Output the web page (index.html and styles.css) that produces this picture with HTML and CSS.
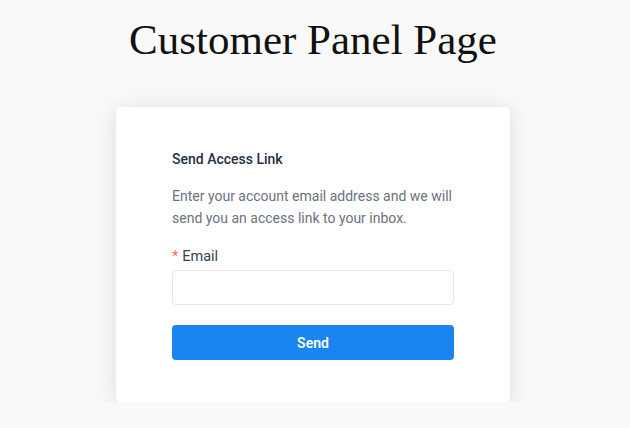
FILE: index.html
```html
<!DOCTYPE html>
<html>
<head>
<meta charset="utf-8">
<link rel="stylesheet" href="styles.css">
</head>
<body>
<main class="page">
  <h1 class="title">Customer Panel Page</h1>
  <section class="card">
    <h2 class="card-title">Send Access Link</h2>
    <p class="card-text">Enter your account email address and we will send you an access link to your inbox.</p>
    <form class="form">
      <label class="label" for="email"><span class="req">*</span>Email</label>
      <input class="input" id="email" type="email">
      <button class="btn" type="button">Send</button>
    </form>
  </section>
</main>
</body>
</html>
```
FILE: styles.css
```css
html, body {
  margin: 0;
  padding: 0;
  background: #f9f9f9;
}
.page {
  display: flex;
  flex-direction: column;
  align-items: center;
  padding-right: 4px;
}
.title {
  margin: 10px 0 0;
  height: 97px;
  font-family: "Liberation Serif", serif;
  font-weight: 400;
  font-size: 43px;
  line-height: 60px;
  color: #111;
}
.card {
  width: 394px;
  box-sizing: border-box;
  padding: 42px 56px 42px;
  background: #fff;
  border-radius: 4px;
  box-shadow: 0 2px 20px rgba(0, 0, 0, 0.12);
  font-family: Roboto, "Liberation Sans", sans-serif;
}
.card-title {
  margin: 0;
  font-size: 14px;
  font-weight: 500;
  line-height: 20px;
  color: #262f45;
}
.card-text {
  margin: 16px 0 0;
  font-size: 14px;
  line-height: 22px;
  color: #6b7280;
}
.form {
  display: flex;
  flex-direction: column;
  margin-top: 17px;
}
.label {
  font-size: 14.5px;
  line-height: 22px;
  color: #374151;
  margin-bottom: 2px;
}
.req {
  color: #f56c6c;
  margin-right: 4px;
}
.input {
  height: 35px;
  box-sizing: border-box;
  border: 1px solid #e5e7eb;
  border-radius: 4px;
  background: #fff;
  outline: none;
}
.btn {
  margin-top: 20px;
  height: 35px;
  border: 0;
  border-radius: 4px;
  background: #1a85ef;
  color: #fff;
  font-family: Roboto, "Liberation Sans", sans-serif;
  font-weight: 600;
  font-size: 14px;
}
```
